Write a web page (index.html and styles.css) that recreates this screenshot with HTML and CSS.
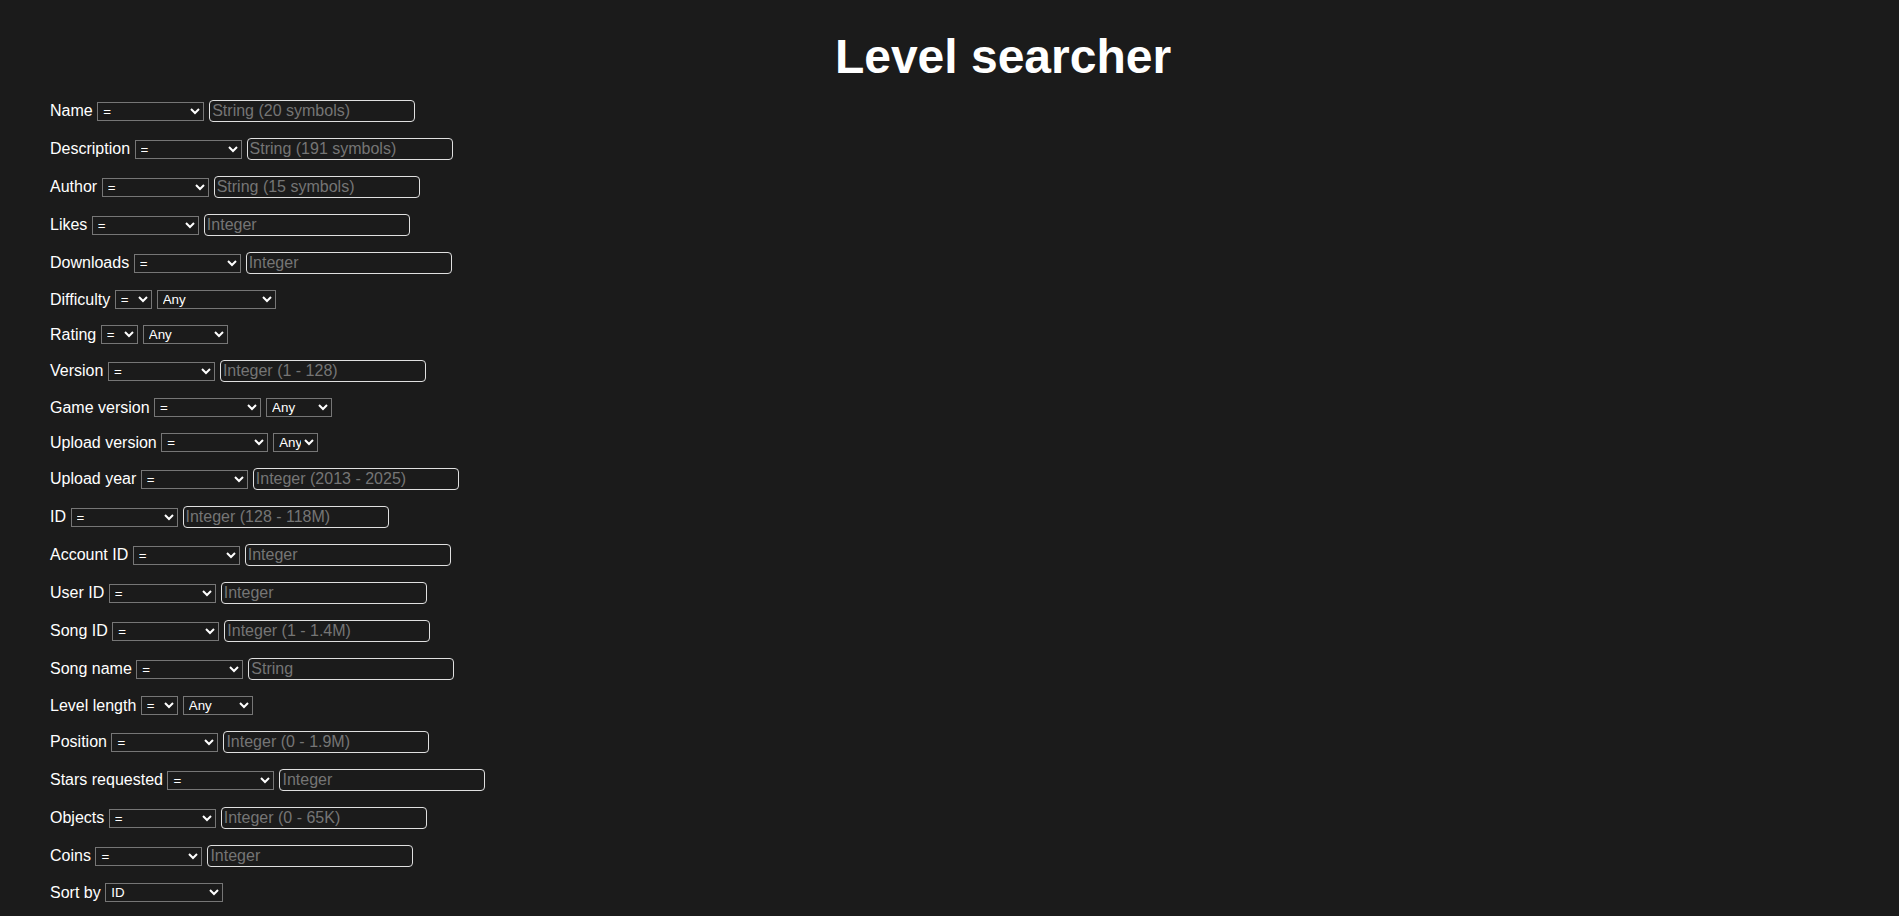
FILE: index.html
```html
<!DOCTYPE html>
<html lang="en">
<head>
<meta charset="utf-8">
<title>Level searcher</title>
<link rel="stylesheet" href="styles.css">
</head>
<body>
<h1 class="title">Level searcher</h1>
<form class="search">
  <div class="row"><label>Name</label><select class="op"><option>=</option></select><input type="text" placeholder="String (20 symbols)"></div>
  <div class="row"><label>Description</label><select class="op"><option>=</option></select><input type="text" placeholder="String (191 symbols)"></div>
  <div class="row"><label>Author</label><select class="op"><option>=</option></select><input type="text" placeholder="String (15 symbols)"></div>
  <div class="row"><label>Likes</label><select class="op"><option>=</option></select><input type="text" placeholder="Integer"></div>
  <div class="row"><label>Downloads</label><select class="op"><option>=</option></select><input type="text" placeholder="Integer"></div>
  <div class="row"><label>Difficulty</label><select class="op-short"><option>=</option></select><select class="sel-diff"><option>Any</option></select></div>
  <div class="row"><label>Rating</label><select class="op-short"><option>=</option></select><select class="sel-rating"><option>Any</option></select></div>
  <div class="row"><label>Version</label><select class="op"><option>=</option></select><input type="text" placeholder="Integer (1 - 128)"></div>
  <div class="row"><label>Game version</label><select class="op"><option>=</option></select><select class="sel-gv"><option>Any</option></select></div>
  <div class="row"><label>Upload version</label><select class="op"><option>=</option></select><select class="sel-uv"><option>Any</option></select></div>
  <div class="row"><label>Upload year</label><select class="op"><option>=</option></select><input type="text" placeholder="Integer (2013 - 2025)"></div>
  <div class="row"><label>ID</label><select class="op"><option>=</option></select><input type="text" placeholder="Integer (128 - 118M)"></div>
  <div class="row"><label>Account ID</label><select class="op"><option>=</option></select><input type="text" placeholder="Integer"></div>
  <div class="row"><label>User ID</label><select class="op"><option>=</option></select><input type="text" placeholder="Integer"></div>
  <div class="row"><label>Song ID</label><select class="op"><option>=</option></select><input type="text" placeholder="Integer (1 - 1.4M)"></div>
  <div class="row"><label>Song name</label><select class="op"><option>=</option></select><input type="text" placeholder="String"></div>
  <div class="row"><label>Level length</label><select class="op-short"><option>=</option></select><select class="sel-len"><option>Any</option></select></div>
  <div class="row"><label>Position</label><select class="op"><option>=</option></select><input type="text" placeholder="Integer (0 - 1.9M)"></div>
  <div class="row"><label>Stars requested</label><select class="op"><option>=</option></select><input type="text" placeholder="Integer"></div>
  <div class="row"><label>Objects</label><select class="op"><option>=</option></select><input type="text" placeholder="Integer (0 - 65K)"></div>
  <div class="row"><label>Coins</label><select class="op"><option>=</option></select><input type="text" placeholder="Integer"></div>
  <div class="row"><label>Sort by</label><select class="sel-sort"><option>ID</option></select></div>
</form>
</body>
</html>
```
FILE: styles.css
```css
html, body {
  margin: 0;
  padding: 0;
  background: #1b1b1b;
  color: #ffffff;
  font-family: "Liberation Sans", Arial, sans-serif;
  font-size: 16px;
}

body {
  padding: 29px 0 0 50px;
  overflow: hidden;
}

.title {
  margin: 0 0 16px 0;
  padding-left: 57px;
  font-size: 48px;
  font-weight: bold;
  text-align: center;
  line-height: 55px;
}

.search {
  display: flex;
  flex-direction: column;
  gap: 16px;
}

.row {
  display: flex;
  align-items: center;
}

.row label {
  margin-right: 4.5px;
  line-height: 18px;
}

.row select {
  height: 19px;
  box-sizing: border-box;
  background-color: #1b1b1b;
  color: #ffffff;
  border: 1px solid #767676;
  border-radius: 0;
  font-family: "Liberation Sans", Arial, sans-serif;
  font-size: 13.33px;
  padding: 0 0 0 1px;
  margin: 0 5px 0 0;
}

.row .op { width: 107px; }
.row .op-short { width: 37px; }
.row .sel-diff { width: 119px; }
.row .sel-rating { width: 85px; }
.row .sel-gv { width: 66px; }
.row .sel-uv { width: 45px; }
.row .sel-len { width: 70px; }
.row .sel-sort { width: 118px; }

.row input {
  width: 206px;
  height: 22px;
  box-sizing: border-box;
  margin: 0;
  padding: 1px 2px;
  background: #1b1b1b;
  color: #ffffff;
  border: 1px solid #e0e0e0;
  border-radius: 4px;
  font-family: "Liberation Sans", Arial, sans-serif;
  font-size: 16px;
}

.row input::placeholder {
  color: #757575;
}
```
